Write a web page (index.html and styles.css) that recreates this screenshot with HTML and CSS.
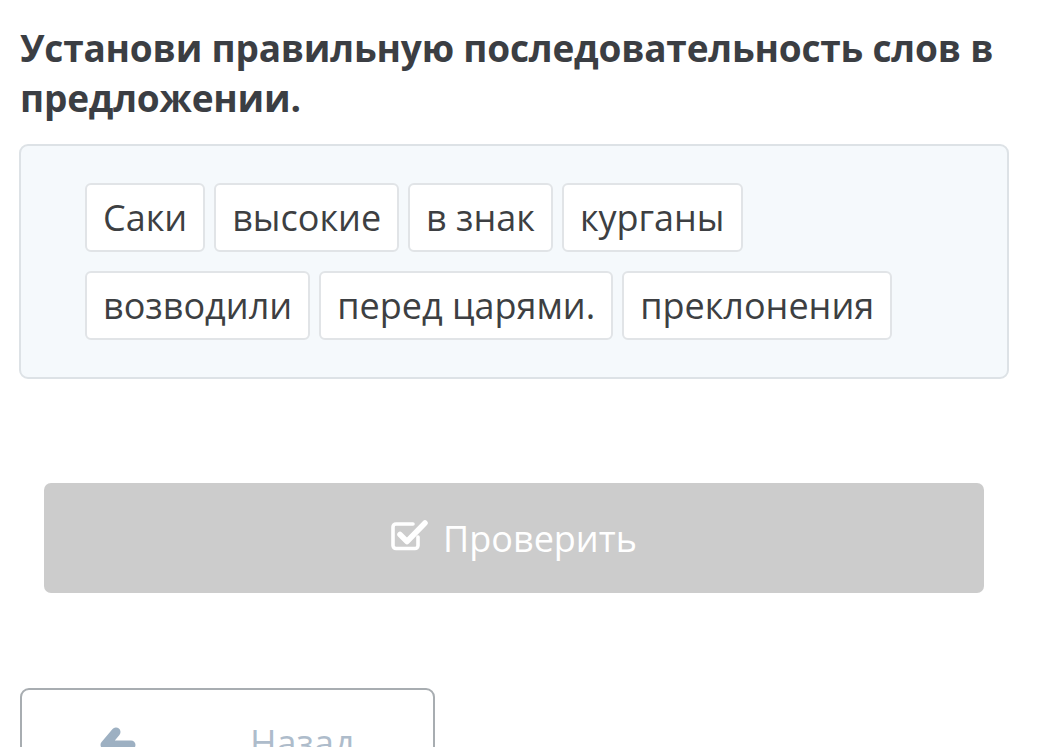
FILE: index.html
```html
<!DOCTYPE html>
<html lang="ru">
<head>
<meta charset="utf-8">
<link rel="stylesheet" href="styles.css">
</head>
<body>
<main class="page">
  <h1 class="title">Установи правильную последовательность слов в предложении.</h1>
  <section class="words">
    <div class="row">
      <span class="chip">Саки</span>
      <span class="chip">высокие</span>
      <span class="chip">в знак</span>
      <span class="chip">курганы</span>
    </div>
    <div class="row">
      <span class="chip">возводили</span>
      <span class="chip">перед царями.</span>
      <span class="chip">преклонения</span>
    </div>
  </section>
  <button class="check">
    <svg class="check-icon" viewBox="0 0 38 34" aria-hidden="true">
      <path d="M27 19v8.5a3 3 0 0 1-3 3H5a3 3 0 0 1-3-3V9a3 3 0 0 1 3-3h17" fill="none" stroke="#fff" stroke-width="3.6" stroke-linecap="round"/>
      <path d="M9 16.5l7 7L34 5" fill="none" stroke="#fff" stroke-width="5.5" stroke-linecap="round" stroke-linejoin="round"/>
    </svg>
    <span>Проверить</span>
  </button>
  <button class="back">
    <svg class="back-icon" viewBox="0 0 40 30" aria-hidden="true">
      <path d="M17 6L6 19h26" fill="none" stroke="#9db0c2" stroke-width="9" stroke-linecap="round" stroke-linejoin="round"/>
    </svg>
    <span>Назад</span>
  </button>
</main>
</body>
</html>
```
FILE: styles.css
```css
html, body {
  margin: 0;
  padding: 0;
  background: #fff;
}
body {
  font-family: "Open Sans", "Noto Sans", sans-serif;
  overflow: hidden;
}
.page {
  padding: 23px 0 0 19px;
  width: 990px;
}
.title {
  margin: 0 0 21px 1px;
  font-size: 37px;
  font-weight: 700;
  line-height: 50px;
  color: #3b3e43;
  letter-spacing: -0.2px;
}
.words {
  box-sizing: border-box;
  width: 990px;
  border: 2px solid #dde2e6;
  border-radius: 9px;
  background: #f5f9fc;
  padding: 37px 64px 37px 64px;
  display: flex;
  flex-direction: column;
  gap: 19px;
}
.row {
  display: flex;
  gap: 9px;
}
.chip {
  box-sizing: border-box;
  height: 69px;
  display: flex;
  align-items: center;
  padding: 0 16px;
  background: #fff;
  border: 2px solid #e1e4e7;
  border-radius: 6px;
  font-size: 36px;
  color: #3d3f42;
}
.check {
  margin: 104px 0 0 25px;
  width: 940px;
  height: 110px;
  border: none;
  border-radius: 7px;
  background: #cccccc;
  color: #fff;
  font-family: inherit;
  font-size: 36px;
  display: flex;
  align-items: center;
  justify-content: center;
  gap: 14px;
  padding: 0;
}
.check-icon {
  width: 38px;
  height: 34px;
  flex-shrink: 0;
  margin-top: -6px;
}
.back {
  margin: 95px 0 0 1px;
  width: 415px;
  height: 100px;
  box-sizing: border-box;
  border: 2px solid #a8adb1;
  border-radius: 9px;
  background: #fff;
  font-family: inherit;
  font-size: 36px;
  color: #aebccb;
  display: flex;
  align-items: flex-start;
  padding: 28px 0 0 77px;
  gap: 111px;
}
.back-icon {
  width: 40px;
  height: 30px;
  flex-shrink: 0;
  margin-top: 8px;
}
```
